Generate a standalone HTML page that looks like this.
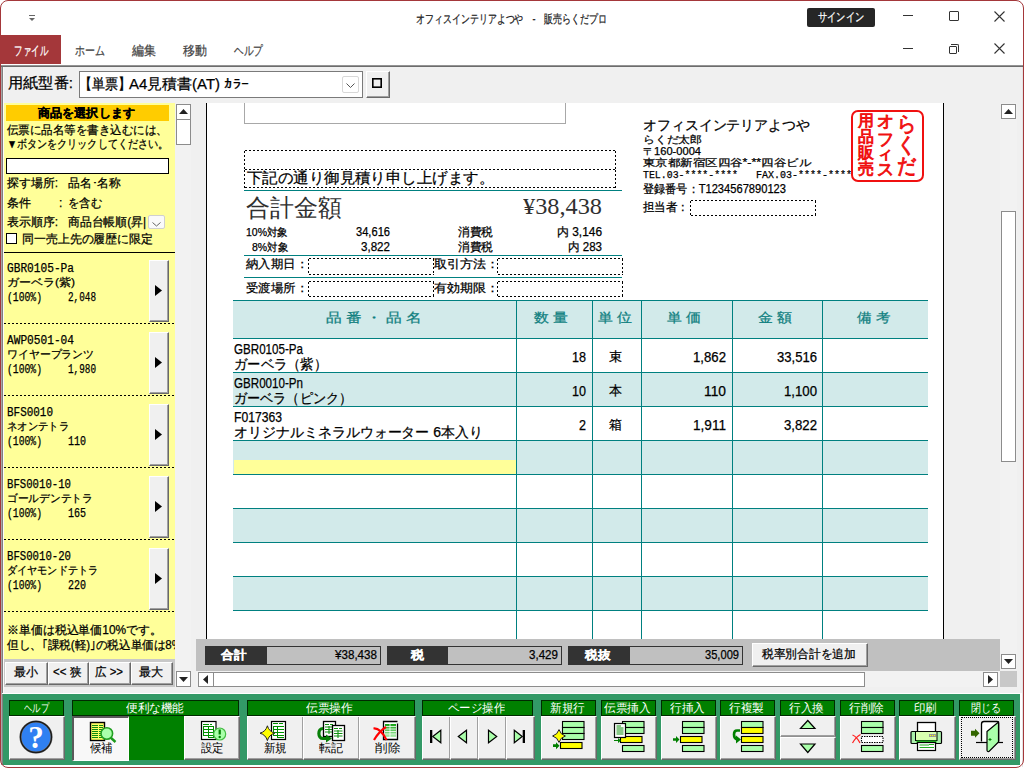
<!DOCTYPE html><html lang="ja"><head><meta charset="utf-8">
<style>
*{box-sizing:border-box;margin:0;padding:0}
html,body{width:1024px;height:768px;overflow:hidden;background:#fff}
body{position:relative;font-family:"Liberation Sans",sans-serif;color:#000}
.a{position:absolute}
.t{position:absolute;white-space:nowrap;line-height:1;-webkit-text-stroke:0.25px currentColor}
svg{position:absolute;overflow:visible}
#win{position:absolute;left:0;top:0;width:1024px;height:768px;overflow:hidden;background:#fff}
.sbtn{position:absolute;background:#fff;border:1px solid #8c8c8c}
.raised{position:absolute;background:#f0f0f0;border-top:1px solid #fff;border-left:1px solid #fff;border-right:1px solid #696969;border-bottom:1px solid #696969;box-shadow:inset -1px -1px 0 #a0a0a0}
.dot{position:absolute;background:repeating-linear-gradient(90deg,#000 0 2px,transparent 2px 4px) 1px 0/100% 1px no-repeat,repeating-linear-gradient(90deg,#000 0 2px,transparent 2px 4px) 1px 100%/100% 1px no-repeat,repeating-linear-gradient(180deg,#000 0 2px,transparent 2px 4px) 0 1px/1px 100% no-repeat,repeating-linear-gradient(180deg,#000 0 2px,transparent 2px 4px) 100% 1px/1px 100% no-repeat}
.tl{position:absolute;background:#008080}
.mono{font-family:"Liberation Mono",monospace}
.item{position:absolute;left:4px;width:171px;height:72px;background:repeating-linear-gradient(90deg,#000 0 2px,transparent 2px 4px) 0 100%/100% 1px no-repeat}
.gh{position:absolute;top:700px;height:16px;background:#008000;border:1px solid #002a00}
.gt{position:absolute;top:702px;font-size:12px;color:#fff;line-height:1;white-space:nowrap}
.tb{position:absolute;top:716px;height:44px;background:#f0f0f0;border-top:1px solid #fff;border-left:1px solid #fff;border-right:1px solid #696969;border-bottom:1px solid #696969;box-shadow:inset -1px -1px 0 #a0a0a0}
.bl{position:absolute;top:742px;font-size:12px;line-height:1;white-space:nowrap}
</style></head><body>
<div id="win">
  <!-- ===== title bar ===== -->
  <div class="a" style="left:29px;top:15px;width:6px;height:1px;background:#666"></div>
  <div class="a" style="left:29px;top:18px;width:0;height:0;border-left:3px solid transparent;border-right:3px solid transparent;border-top:3.5px solid #666"></div>
  <div class="t" style="left: 416px; top: 13px; font-size: 12px; color: rgb(34, 34, 34); transform: scaleX(0.746); transform-origin: 0px 0px;">オフィスインテリアよつや　-　販売らくだプロ</div>
  <div class="a" style="left:807px;top:8px;width:68px;height:19px;background:#262626;border-radius:2px"></div>
  <div class="t" style="left: 818px; top: 11px; font-size: 12px; color: rgb(255, 255, 255); transform: scaleX(0.767); transform-origin: 0px 0px;">サインイン</div>
  <div class="a" style="left:903px;top:15px;width:10px;height:1px;background:#333"></div>
  <div class="a" style="left:949px;top:11px;width:10px;height:10px;border:1px solid #333;border-radius:1px"></div>
  <svg style="left:994px;top:11px" width="11" height="11"><path d="M0.5 0.5L10.5 10.5M10.5 0.5L0.5 10.5" stroke="#333" stroke-width="1.1"></path></svg>
  <div class="a" style="left:903px;top:48px;width:10px;height:1px;background:#333"></div>
  <div class="a" style="left:949px;top:46px;width:8px;height:8px;border:1px solid #333;border-radius:1px"></div>
  <div class="a" style="left:951px;top:44px;width:8px;height:8px;border-top:1px solid #333;border-right:1px solid #333;border-radius:0 2px 0 0"></div>
  <svg style="left:994px;top:43px" width="11" height="11"><path d="M0.5 0.5L10.5 10.5M10.5 0.5L0.5 10.5" stroke="#333" stroke-width="1.1"></path></svg>
  <!-- ===== menu ===== -->
  <div class="a" style="left:0;top:35px;width:61px;height:29px;background:#a4373a"></div>
  <div class="t" style="left: 14px; top: 44px; font-size: 13px; color: rgb(255, 255, 255); transform: scaleX(0.654); transform-origin: 0px 0px;">ファイル</div>
  <div class="t" style="left: 75px; top: 44px; font-size: 13px; color: rgb(68, 68, 68); transform: scaleX(0.769); transform-origin: 0px 0px;">ホーム</div>
  <div class="t" style="left: 132px; top: 44px; font-size: 13px; color: rgb(68, 68, 68); transform: scaleX(0.923); transform-origin: 0px 0px;">編集</div>
  <div class="t" style="left: 183px; top: 44px; font-size: 13px; color: rgb(68, 68, 68); transform: scaleX(0.923); transform-origin: 0px 0px;">移動</div>
  <div class="t" style="left: 234px; top: 44px; font-size: 13px; color: rgb(68, 68, 68); transform: scaleX(0.744); transform-origin: 0px 0px;">ヘルプ</div>
  <div class="a" style="left:0;top:65px;width:1024px;height:1px;background:#949494"></div><div class="a" style="left:0;top:66px;width:1024px;height:1px;background:#6c6c6c"></div>

  <!-- ===== form area ===== -->
  <div class="a" style="left:0;top:67px;width:1024px;height:627px;background:#f0f0f0"></div>
  <div class="a" style="left:1px;top:67px;width:1px;height:698px;background:#a8a8a8"></div><div class="a" style="left:2px;top:67px;width:1px;height:698px;background:#808080"></div><div class="a" style="left:3px;top:67px;width:1px;height:627px;background:#fafafa"></div>
  <!-- paper combo -->
  <div class="t" style="left: 8px; top: 75px; font-size: 15px; transform: scaleX(1.013); transform-origin: 0px 0px;">用紙型番:</div>
  <div class="a" style="left:79px;top:71px;width:284px;height:27px;background:#fff;border:1px solid #7a7a7a"></div>
  <div class="t" style="left: 79px; top: 76px; font-size: 15px; transform: scaleX(0.867); transform-origin: 0px 0px;">【単票】</div><div class="t" style="left: 129px; top: 76px; font-size: 15px; transform: scaleX(0.996); transform-origin: 0px 0px;">A4見積書(AT)</div><div class="t" style="left: 224px; top: 77px; font-size: 13px; transform: scaleX(1.238); transform-origin: 0px 0px;">ｶﾗｰ</div>
  <div class="a" style="left:342px;top:76px;width:17px;height:17px;border:1px solid #d8d8d8;border-radius:2px;background:#fff"></div>
  <svg style="left:346px;top:83px" width="10" height="6"><path d="M0.5 0.5L4.5 4.5L8.5 0.5" stroke="#555" fill="none" stroke-width="1"></path></svg>
  <div class="raised" style="left:366px;top:71px;width:24px;height:27px"></div>
  <svg style="left:371px;top:77px" width="12" height="12"><rect x="1.8" y="1.8" width="8.4" height="8.4" fill="none" stroke="#000" stroke-width="1.6"></rect></svg>

  <!-- ===== left sidebar ===== -->
  <div class="a" style="left:4px;top:103px;width:171px;height:556px;background:#ffff99;overflow:hidden">
    <div class="a" style="left:2px;top:2px;width:163px;height:16px;background:#ffcc00"></div>
    <div class="t" style="left: 34px; top: 4px; font-size: 12px; font-weight: bold; transform: scaleX(1.01); transform-origin: 0px 0px;">商品を選択します</div>
    <div class="t" style="left: 3px; top: 21px; font-size: 12px; transform: scaleX(0.958); transform-origin: 0px 0px;">伝票に品名等を書き込むには、</div>
    <div class="t" style="left: 3px; top: 35px; font-size: 12px; transform: scaleX(0.839); transform-origin: 0px 0px;">▼ボタンをクリックしてください。</div>
    <div class="a" style="left:2px;top:55px;width:163px;height:16px;background:#fff;border:1px solid #000"></div>
    <div class="t" style="left: 3px; top: 74px; font-size: 12px; transform: scaleX(0.993); transform-origin: 0px 0px;">探す場所:</div>
    <div class="t" style="left: 64px; top: 74px; font-size: 12px; transform: scaleX(0.981); transform-origin: 0px 0px;">品名･名称</div>
    <div class="t" style="left: 3px; top: 94px; font-size: 12px; transform: scaleX(1); transform-origin: 0px 0px;">条件</div>
    <div class="t" style="left:55px;top:94px;font-size:12px">:</div>
    <div class="t" style="left: 64px; top: 94px; font-size: 12px; transform: scaleX(0.944); transform-origin: 0px 0px;">を含む</div>
    <div class="t" style="left: 3px; top: 113px; font-size: 12px; transform: scaleX(0.993); transform-origin: 0px 0px;">表示順序:</div>
    <div class="t" style="left: 64px; top: 113px; font-size: 12px; transform: scaleX(0.986); transform-origin: 0px 0px;">商品台帳順(昇|</div>
    <div class="a" style="left:144px;top:112px;width:17px;height:14px;border:1px solid #d0d0d0;border-radius:2px;background:#fafafa"></div>
    <svg style="left:148px;top:119px" width="9" height="5"><path d="M0.5 0.5L4.5 4L8.5 0.5" stroke="#666" fill="none" stroke-width="1"></path></svg>
    <div class="a" style="left:2px;top:130px;width:11px;height:11px;background:#fff;border:1px solid #000"></div>
    <div class="t" style="left: 18px; top: 130px; font-size: 12px; transform: scaleX(0.992); transform-origin: 0px 0px;">同一売上先の履歴に限定</div>
    <div class="a" style="left:0;top:149px;width:171px;height:1px;background:#000"></div>
    <!-- items -->
    <div class="item" style="left:0;top:150px;height:71px"></div>
    <div class="item" style="left:0;top:222px;height:71px"></div>
    <div class="item" style="left:0;top:294px;height:71px"></div>
    <div class="item" style="left:0;top:366px;height:71px"></div>
    <div class="item" style="left:0;top:438px;height:71px"></div>
    <!--items-->
    <div class="t mono" style="left: 3px; top: 160px; font-size: 12px; transform: scaleX(0.93); transform-origin: 0px 0px;">GBR0105-Pa</div>
    <div class="t" style="left: 3px; top: 174px; font-size: 11px; transform: scaleX(1.091); transform-origin: 0px 0px;">ガーベラ(紫)</div>
    <div class="t mono" style="left: 3px; top: 189px; font-size: 12px; transform: scaleX(0.81); transform-origin: 0px 0px;">(100%)</div>
    <div class="t mono" style="left: 64px; top: 189px; font-size: 12px; transform: scaleX(0.777); transform-origin: 0px 0px;">2,048</div>
    <div class="raised" style="left:145px;top:157px;width:20px;height:62px"></div>
    <svg style="left:151px;top:182px" width="7" height="11"><path d="M0 0L7 5.5L0 11Z" fill="#000"></path></svg>
    <div class="t mono" style="left: 3px; top: 232px; font-size: 12px; transform: scaleX(0.93); transform-origin: 0px 0px;">AWP0501-04</div>
    <div class="t" style="left: 3px; top: 246px; font-size: 11px; transform: scaleX(0.989); transform-origin: 0px 0px;">ワイヤープランツ</div>
    <div class="t mono" style="left: 3px; top: 261px; font-size: 12px; transform: scaleX(0.81); transform-origin: 0px 0px;">(100%)</div>
    <div class="t mono" style="left: 64px; top: 261px; font-size: 12px; transform: scaleX(0.777); transform-origin: 0px 0px;">1,980</div>
    <div class="raised" style="left:145px;top:229px;width:20px;height:62px"></div>
    <svg style="left:151px;top:254px" width="7" height="11"><path d="M0 0L7 5.5L0 11Z" fill="#000"></path></svg>
    <div class="t mono" style="left: 3px; top: 304px; font-size: 12px; transform: scaleX(0.912); transform-origin: 0px 0px;">BFS0010</div>
    <div class="t" style="left: 3px; top: 318px; font-size: 11px; transform: scaleX(0.939); transform-origin: 0px 0px;">ネオンテトラ</div>
    <div class="t mono" style="left: 3px; top: 333px; font-size: 12px; transform: scaleX(0.81); transform-origin: 0px 0px;">(100%)</div>
    <div class="t mono" style="left: 64px; top: 333px; font-size: 12px; transform: scaleX(0.833); transform-origin: 0px 0px;">110</div>
    <div class="raised" style="left:145px;top:301px;width:20px;height:62px"></div>
    <svg style="left:151px;top:326px" width="7" height="11"><path d="M0 0L7 5.5L0 11Z" fill="#000"></path></svg>
    <div class="t mono" style="left: 3px; top: 376px; font-size: 12px; transform: scaleX(0.889); transform-origin: 0px 0px;">BFS0010-10</div>
    <div class="t" style="left: 3px; top: 390px; font-size: 11px; transform: scaleX(0.977); transform-origin: 0px 0px;">ゴールデンテトラ</div>
    <div class="t mono" style="left: 3px; top: 405px; font-size: 12px; transform: scaleX(0.81); transform-origin: 0px 0px;">(100%)</div>
    <div class="t mono" style="left: 64px; top: 405px; font-size: 12px; transform: scaleX(0.833); transform-origin: 0px 0px;">165</div>
    <div class="raised" style="left:145px;top:373px;width:20px;height:62px"></div>
    <svg style="left:151px;top:398px" width="7" height="11"><path d="M0 0L7 5.5L0 11Z" fill="#000"></path></svg>
    <div class="t mono" style="left: 3px; top: 448px; font-size: 12px; transform: scaleX(0.889); transform-origin: 0px 0px;">BFS0010-20</div>
    <div class="t" style="left: 3px; top: 462px; font-size: 11px; transform: scaleX(0.919); transform-origin: 0px 0px;">ダイヤモンドテトラ</div>
    <div class="t mono" style="left: 3px; top: 477px; font-size: 12px; transform: scaleX(0.81); transform-origin: 0px 0px;">(100%)</div>
    <div class="t mono" style="left: 64px; top: 477px; font-size: 12px; transform: scaleX(0.833); transform-origin: 0px 0px;">220</div>
    <div class="raised" style="left:145px;top:445px;width:20px;height:62px"></div>
    <svg style="left:151px;top:470px" width="7" height="11"><path d="M0 0L7 5.5L0 11Z" fill="#000"></path></svg>
    <!--/items-->
    <div class="t" style="left: 3px; top: 521px; font-size: 12px; transform: scaleX(0.993); transform-origin: 0px 0px;">※単価は税込単価10%です。</div>
    <div class="t" style="left: 3px; top: 536px; font-size: 12px; transform: scaleX(0.965); transform-origin: 0px 0px;">但し、｢課税(軽)｣の税込単価は8%</div>
  </div>
  <!-- sidebar scrollbar -->
  <div class="a" style="left:175px;top:103px;width:16px;height:584px;background:#f2f2f2"></div>
  <div class="sbtn" style="left:176px;top:104px;width:15px;height:16px"></div>
  <svg style="left:179px;top:109px" width="9" height="5"><path d="M0 5L4.5 0L9 5Z" fill="#222"></path></svg>
  <div class="sbtn" style="left:176px;top:119px;width:15px;height:26px"></div>
  <div class="sbtn" style="left:176px;top:671px;width:15px;height:16px"></div>
  <svg style="left:179px;top:677px" width="9" height="5"><path d="M0 0L4.5 5L9 0Z" fill="#222"></path></svg>
  <!-- sidebar nav buttons -->
  <div class="a" style="left:4px;top:659px;width:171px;height:28px;background:#c8c8c8"></div>
  <div class="raised" style="left:5px;top:662px;width:43px;height:23px"></div>
  <div class="raised" style="left:48px;top:662px;width:41px;height:23px"></div>
  <div class="raised" style="left:89px;top:662px;width:42px;height:23px"></div>
  <div class="raised" style="left:131px;top:662px;width:42px;height:23px"></div>
  <div class="t" style="left: 14px; top: 666px; font-size: 12px; transform: scaleX(1); transform-origin: 0px 0px;">最小</div>
  <div class="t" style="left: 53px; top: 666px; font-size: 12px; transform: scaleX(0.954); transform-origin: 0px 0px;">&lt;&lt; 狭</div>
  <div class="t" style="left: 95px; top: 666px; font-size: 12px; transform: scaleX(0.954); transform-origin: 0px 0px;">広 &gt;&gt;</div>
  <div class="t" style="left: 139px; top: 666px; font-size: 12px; transform: scaleX(1); transform-origin: 0px 0px;">最大</div>

    <!-- ===== page ===== -->
  <div class="a" style="left:207px;top:103px;width:736px;height:536px;background:#fff"></div>
  <div class="a" style="left:206px;top:103px;width:1px;height:536px;background:#000"></div>
  <div class="a" style="left:943px;top:103px;width:1px;height:536px;background:#000"></div>
  <!-- top box -->
  <div class="a" style="left:244px;top:98px;width:322px;height:26px;border:1px solid #a8a8a8;border-top:none"></div>
  <div class="a" style="left:207px;top:98px;width:736px;height:5px;background:#f0f0f0"></div>
  <!-- message boxes -->
  <div class="dot" style="left:244px;top:150px;width:372px;height:20px"></div>
  <div class="dot" style="left:244px;top:169px;width:372px;height:19px"></div>
  <div class="t" style="left: 247px; top: 170px; font-size: 15px; transform: scaleX(1.029); transform-origin: 0px 0px;">下記の通り御見積り申し上げます。</div>
  <div class="tl" style="left:244px;top:190px;width:378px;height:1px"></div>
  <div class="t" style="left: 246px; top: 196px; font-size: 24px; font-family: &quot;Liberation Serif&quot;, serif; -webkit-text-stroke: 0px; color: rgb(48, 48, 48); transform: scaleX(1); transform-origin: 0px 0px;">合計金額</div>
  <div class="t" style="left: 523px; top: 194px; font-size: 24px; font-family: &quot;Liberation Serif&quot;, serif; -webkit-text-stroke: 0px; color: rgb(48, 48, 48); transform: scaleX(1.013); transform-origin: 0px 0px;">¥38,438</div>
  <div class="t" style="left: 246px; top: 227px; font-size: 11px; transform: scaleX(0.954); transform-origin: 0px 0px;">10%対象</div>
  <div class="t" style="left: 252px; top: 242px; font-size: 11px; transform: scaleX(0.95); transform-origin: 0px 0px;">8%対象</div>
  <div class="t" style="left: 356px; top: 226px; font-size: 12px; transform: scaleX(0.926); transform-origin: 0px 0px;">34,616</div>
  <div class="t" style="left: 361px; top: 241px; font-size: 12px; transform: scaleX(0.966); transform-origin: 0px 0px;">3,822</div>
  <div class="t" style="left: 458px; top: 226px; font-size: 12px; transform: scaleX(0.972); transform-origin: 0px 0px;">消費税</div>
  <div class="t" style="left: 458px; top: 241px; font-size: 12px; transform: scaleX(0.972); transform-origin: 0px 0px;">消費税</div>
  <div class="t" style="left: 557px; top: 226px; font-size: 12px; transform: scaleX(0.992); transform-origin: 0px 0px;">内 3,146</div>
  <div class="t" style="left: 568px; top: 241px; font-size: 12px; transform: scaleX(0.962); transform-origin: 0px 0px;">内 283</div>
  <div class="tl" style="left:244px;top:255px;width:378px;height:1px"></div>
  <div class="t" style="left: 246px; top: 258px; font-size: 12px; transform: scaleX(1.033); transform-origin: 0px 0px;">納入期日：</div>
  <div class="dot" style="left:308px;top:258px;width:126px;height:17px"></div>
  <div class="t" style="left: 434px; top: 258px; font-size: 12px; transform: scaleX(1.083); transform-origin: 0px 0px;">取引方法：</div>
  <div class="dot" style="left:497px;top:258px;width:126px;height:17px"></div>
  <div class="tl" style="left:244px;top:277px;width:378px;height:1px"></div>
  <div class="t" style="left: 246px; top: 282px; font-size: 12px; transform: scaleX(1.033); transform-origin: 0px 0px;">受渡場所：</div>
  <div class="dot" style="left:308px;top:281px;width:126px;height:16px"></div>
  <div class="t" style="left: 434px; top: 282px; font-size: 12px; transform: scaleX(1.083); transform-origin: 0px 0px;">有効期限：</div>
  <div class="dot" style="left:497px;top:281px;width:126px;height:16px"></div>
  <!-- company -->
  <div class="t" style="left: 643px; top: 118px; font-size: 14px; transform: scaleX(0.994); transform-origin: 0px 0px;">オフィスインテリアよつや</div>
  <div class="t" style="left: 643px; top: 135px; font-size: 10px; transform: scaleX(1.18); transform-origin: 0px 0px;">らくだ太郎</div>
  <div class="t" style="left: 643px; top: 147px; font-size: 10px; transform: scaleX(1.11); transform-origin: 0px 0px;">〒160-0004</div>
  <div class="t" style="left: 643px; top: 158px; font-size: 10px; transform: scaleX(1.244); transform-origin: 0px 0px;">東京都新宿区四谷*-**四谷ビル</div>
  <div class="t mono" style="left: 643px; top: 170px; font-size: 11px; transform: scaleX(0.899); transform-origin: 0px 0px;">TEL.03-****-****</div><div class="t mono" style="left: 756px; top: 170px; font-size: 11px; transform: scaleX(0.909); transform-origin: 0px 0px;">FAX.03-****-****</div>
  <div class="t" style="left: 643px; top: 183px; font-size: 12px; transform: scaleX(0.928); transform-origin: 0px 0px;">登録番号：T1234567890123</div>
  <div class="t" style="left: 643px; top: 201px; font-size: 12px; transform: scaleX(0.958); transform-origin: 0px 0px;">担当者：</div>
  <div class="dot" style="left:690px;top:200px;width:126px;height:16px"></div>
  <div class="a" style="left:851px;top:110px;width:73px;height:72px;border:2px solid #f01010;border-radius:7px"></div>
  <div class="t" style="left: 858px; top: 113px; font-size: 16px; color: rgb(240, 16, 16); -webkit-text-stroke: 0.9px rgb(240, 16, 16); transform: scaleX(1); transform-origin: 0px 0px;">用</div>
  <div class="t" style="left: 858px; top: 129px; font-size: 16px; color: rgb(240, 16, 16); -webkit-text-stroke: 0.9px rgb(240, 16, 16); transform: scaleX(1); transform-origin: 0px 0px;">品</div>
  <div class="t" style="left: 858px; top: 145px; font-size: 16px; color: rgb(240, 16, 16); -webkit-text-stroke: 0.9px rgb(240, 16, 16); transform: scaleX(1); transform-origin: 0px 0px;">販</div>
  <div class="t" style="left: 858px; top: 161px; font-size: 16px; color: rgb(240, 16, 16); -webkit-text-stroke: 0.9px rgb(240, 16, 16); transform: scaleX(1); transform-origin: 0px 0px;">売</div>
  <div class="t" style="left: 877px; top: 113px; font-size: 17px; color: rgb(240, 16, 16); -webkit-text-stroke: 0.9px rgb(240, 16, 16); transform: scaleX(1); transform-origin: 0px 0px;">オ</div>
  <div class="t" style="left: 877px; top: 131px; font-size: 17px; color: rgb(240, 16, 16); -webkit-text-stroke: 0.9px rgb(240, 16, 16); transform: scaleX(1); transform-origin: 0px 0px;">フ</div>
  <div class="t" style="left: 877px; top: 146px; font-size: 15px; color: rgb(240, 16, 16); -webkit-text-stroke: 0.9px rgb(240, 16, 16); transform: scaleX(1.067); transform-origin: 0px 0px;">ィ</div>
  <div class="t" style="left: 877px; top: 161px; font-size: 17px; color: rgb(240, 16, 16); -webkit-text-stroke: 0.9px rgb(240, 16, 16); transform: scaleX(1); transform-origin: 0px 0px;">ス</div>
  <div class="t" style="left: 897px; top: 113px; font-size: 21px; color: rgb(240, 16, 16); -webkit-text-stroke: 0.9px rgb(240, 16, 16); transform: scaleX(0.909); transform-origin: 0px 0px;">ら</div>
  <div class="t" style="left: 897px; top: 134px; font-size: 21px; color: rgb(240, 16, 16); -webkit-text-stroke: 0.9px rgb(240, 16, 16); transform: scaleX(0.909); transform-origin: 0px 0px;">く</div>
  <div class="t" style="left: 897px; top: 155px; font-size: 21px; color: rgb(240, 16, 16); -webkit-text-stroke: 0.9px rgb(240, 16, 16); transform: scaleX(0.909); transform-origin: 0px 0px;">だ</div>
  <div class="a" style="left:233px;top:300px;width:695px;height:38px;background:#d2eaea"></div>
  <div class="a" style="left:233px;top:372px;width:695px;height:34px;background:#d2eaea"></div>
  <div class="a" style="left:233px;top:440px;width:695px;height:34px;background:#d2eaea"></div>
  <div class="a" style="left:233px;top:508px;width:695px;height:34px;background:#d2eaea"></div>
  <div class="a" style="left:233px;top:576px;width:695px;height:34px;background:#d2eaea"></div>
  <div class="a" style="left:234px;top:460px;width:282px;height:14px;background:#ffff99"></div>
  <div class="tl" style="left:233px;top:300px;width:695px;height:1px"></div>
  <div class="tl" style="left:233px;top:338px;width:695px;height:1px"></div>
  <div class="tl" style="left:233px;top:372px;width:695px;height:1px"></div>
  <div class="tl" style="left:233px;top:406px;width:695px;height:1px"></div>
  <div class="tl" style="left:233px;top:440px;width:695px;height:1px"></div>
  <div class="tl" style="left:233px;top:474px;width:695px;height:1px"></div>
  <div class="tl" style="left:233px;top:508px;width:695px;height:1px"></div>
  <div class="tl" style="left:233px;top:542px;width:695px;height:1px"></div>
  <div class="tl" style="left:233px;top:576px;width:695px;height:1px"></div>
  <div class="tl" style="left:233px;top:610px;width:695px;height:1px"></div>
  <div class="tl" style="left:516px;top:300px;width:1px;height:339px"></div>
  <div class="tl" style="left:592px;top:300px;width:1px;height:339px"></div>
  <div class="tl" style="left:641px;top:300px;width:1px;height:339px"></div>
  <div class="tl" style="left:732px;top:300px;width:1px;height:339px"></div>
  <div class="tl" style="left:822px;top:300px;width:1px;height:339px"></div>
  <div class="t" style="left: 326px; top: 311px; font-size: 13px; color: rgb(15, 127, 127); transform: scaleX(1.208); transform-origin: 0px 0px;">品&nbsp;番&nbsp;・&nbsp;品&nbsp;名</div>
  <div class="t" style="left: 534px; top: 311px; font-size: 13px; color: rgb(15, 127, 127); transform: scaleX(1.148); transform-origin: 0px 0px;">数&nbsp;量</div>
  <div class="t" style="left: 598px; top: 311px; font-size: 13px; color: rgb(15, 127, 127); transform: scaleX(1.148); transform-origin: 0px 0px;">単&nbsp;位</div>
  <div class="t" style="left: 667px; top: 311px; font-size: 13px; color: rgb(15, 127, 127); transform: scaleX(1.148); transform-origin: 0px 0px;">単&nbsp;価</div>
  <div class="t" style="left: 758px; top: 311px; font-size: 13px; color: rgb(15, 127, 127); transform: scaleX(1.148); transform-origin: 0px 0px;">金&nbsp;額</div>
  <div class="t" style="left: 857px; top: 311px; font-size: 13px; color: rgb(15, 127, 127); transform: scaleX(1.114); transform-origin: 0px 0px;">備&nbsp;考</div>
  <div class="t" style="left: 234px; top: 342px; font-size: 14px; transform: scaleX(0.829); transform-origin: 0px 0px;">GBR0105-Pa</div>
  <div class="t" style="left: 234px; top: 357px; font-size: 14px; transform: scaleX(0.949); transform-origin: 0px 0px;">ガーベラ（紫）</div>
  <div class="t" style="left: 572px; top: 350px; font-size: 14px; transform: scaleX(0.899); transform-origin: 0px 0px;">18</div>
  <div class="t" style="left: 609px; top: 350px; font-size: 13px; transform: scaleX(1); transform-origin: 0px 0px;">束</div>
  <div class="t" style="left: 693px; top: 350px; font-size: 14px; transform: scaleX(0.942); transform-origin: 0px 0px;">1,862</div>
  <div class="t" style="left: 777px; top: 350px; font-size: 14px; transform: scaleX(0.934); transform-origin: 0px 0px;">33,516</div>
  <div class="t" style="left: 234px; top: 376px; font-size: 14px; transform: scaleX(0.829); transform-origin: 0px 0px;">GBR0010-Pn</div>
  <div class="t" style="left: 234px; top: 391px; font-size: 14px; transform: scaleX(0.937); transform-origin: 0px 0px;">ガーベラ（ピンク）</div>
  <div class="t" style="left: 572px; top: 384px; font-size: 14px; transform: scaleX(0.899); transform-origin: 0px 0px;">10</div>
  <div class="t" style="left: 609px; top: 384px; font-size: 13px; transform: scaleX(1); transform-origin: 0px 0px;">本</div>
  <div class="t" style="left: 704px; top: 384px; font-size: 14px; transform: scaleX(0.985); transform-origin: 0px 0px;">110</div>
  <div class="t" style="left: 784px; top: 384px; font-size: 14px; transform: scaleX(0.942); transform-origin: 0px 0px;">1,100</div>
  <div class="t" style="left: 234px; top: 410px; font-size: 14px; transform: scaleX(0.868); transform-origin: 0px 0px;">F017363</div>
  <div class="t" style="left: 234px; top: 425px; font-size: 14px; transform: scaleX(0.997); transform-origin: 0px 0px;">オリジナルミネラルウォーター 6本入り</div>
  <div class="t" style="left: 579px; top: 418px; font-size: 14px; transform: scaleX(0.898); transform-origin: 0px 0px;">2</div>
  <div class="t" style="left: 609px; top: 418px; font-size: 13px; transform: scaleX(1); transform-origin: 0px 0px;">箱</div>
  <div class="t" style="left: 693px; top: 418px; font-size: 14px; transform: scaleX(0.971); transform-origin: 0px 0px;">1,911</div>
  <div class="t" style="left: 784px; top: 418px; font-size: 14px; transform: scaleX(0.942); transform-origin: 0px 0px;">3,822</div>
  <!-- right scrollbar -->
  <div class="a" style="left:1000px;top:103px;width:17px;height:567px;background:#f2f2f2"></div>
  <div class="sbtn" style="left:1001px;top:104px;width:15px;height:15px"></div>
  <svg style="left:1004px;top:109px" width="9" height="5"><path d="M0 5L4.5 0L9 5Z" fill="#222"></path></svg>
  <div class="sbtn" style="left:1001px;top:211px;width:15px;height:251px"></div>
  <div class="sbtn" style="left:1001px;top:654px;width:15px;height:15px"></div>
  <svg style="left:1004px;top:659px" width="9" height="5"><path d="M0 0L4.5 5L9 0Z" fill="#222"></path></svg>
  <!-- totals bar -->
  <div class="a" style="left:196px;top:639px;width:804px;height:32px;background:#c0c0c0"></div>
  <div class="a" style="left:205px;top:646px;width:62px;height:19px;background:#333"></div>
  <div class="t" style="left: 221px; top: 649px; font-size: 12px; color: rgb(255, 255, 255); font-weight: bold; transform: scaleX(1.042); transform-origin: 0px 0px;">合計</div>
  <div class="a" style="left:266px;top:646px;width:115px;height:19px;background:#c0c0c0;border:1px solid #333"></div>
  <div class="t" style="left: 335px; top: 649px; font-size: 12px; transform: scaleX(0.968); transform-origin: 0px 0px;">¥38,438</div>
  <div class="a" style="left:387px;top:646px;width:61px;height:19px;background:#333"></div>
  <div class="t" style="left: 411px; top: 649px; font-size: 12px; color: rgb(255, 255, 255); font-weight: bold; transform: scaleX(1.083); transform-origin: 0px 0px;">税</div>
  <div class="a" style="left:447px;top:646px;width:115px;height:19px;background:#c0c0c0;border:1px solid #333"></div>
  <div class="t" style="left: 529px; top: 649px; font-size: 12px; transform: scaleX(0.966); transform-origin: 0px 0px;">3,429</div>
  <div class="a" style="left:568px;top:646px;width:62px;height:19px;background:#333"></div>
  <div class="t" style="left: 585px; top: 649px; font-size: 12px; color: rgb(255, 255, 255); font-weight: bold; transform: scaleX(1.042); transform-origin: 0px 0px;">税抜</div>
  <div class="a" style="left:629px;top:646px;width:114px;height:19px;background:#c0c0c0;border:1px solid #333"></div>
  <div class="t" style="left: 705px; top: 649px; font-size: 12px; transform: scaleX(0.926); transform-origin: 0px 0px;">35,009</div>
  <div class="raised" style="left:752px;top:643px;width:116px;height:24px"></div>
  <div class="t" style="left: 762px; top: 648px; font-size: 12px; transform: scaleX(0.979); transform-origin: 0px 0px;">税率別合計を追加</div>
  <!-- h scrollbar -->
  <div class="a" style="left:196px;top:671px;width:804px;height:16px;background:#f2f2f2"></div>
  <div class="sbtn" style="left:198px;top:672px;width:16px;height:15px"></div>
  <svg style="left:203px;top:675px" width="5" height="9"><path d="M5 0L0 4.5L5 9Z" fill="#222"></path></svg>
  <div class="sbtn" style="left:213px;top:672px;width:652px;height:15px"></div>
  <div class="sbtn" style="left:983px;top:672px;width:15px;height:15px"></div>
  <svg style="left:988px;top:675px" width="5" height="9"><path d="M0 0L5 4.5L0 9Z" fill="#222"></path></svg>
  <div class="a" style="left:1000px;top:671px;width:17px;height:16px;background:#c8c8c8"></div>

    <!-- ===== toolbar ===== -->
  <div class="a" style="left:2px;top:693px;width:1020px;height:1px;background:#fff"></div>
  <div class="a" style="left:3px;top:694px;width:1017px;height:71px;background:#339966"></div>
  <div class="gh" style="left:9px;width:55px"></div>
  <div class="gh" style="left:72px;width:167px"></div>
  <div class="gh" style="left:247px;width:168px"></div>
  <div class="gh" style="left:422px;width:111px"></div>
  <div class="gh" style="left:541px;width:55px"></div>
  <div class="gh" style="left:601px;width:55px"></div>
  <div class="gh" style="left:661px;width:55px"></div>
  <div class="gh" style="left:720px;width:55px"></div>
  <div class="gh" style="left:780px;width:55px"></div>
  <div class="gh" style="left:840px;width:55px"></div>
  <div class="gh" style="left:899px;width:55px"></div>
  <div class="gh" style="left:959px;width:55px"></div>
  <div class="gt" style="left: 24px; transform: scaleX(0.694); transform-origin: 0px 0px;">ヘルプ</div>
  <div class="gt" style="left: 126px; transform: scaleX(0.967); transform-origin: 0px 0px;">便利な機能</div>
  <div class="gt" style="left: 306px; transform: scaleX(0.979); transform-origin: 0px 0px;">伝票操作</div>
  <div class="gt" style="left: 448px; transform: scaleX(0.95); transform-origin: 0px 0px;">ページ操作</div>
  <div class="gt" style="left: 550px; transform: scaleX(0.972); transform-origin: 0px 0px;">新規行</div>
  <div class="gt" style="left: 604px; transform: scaleX(0.979); transform-origin: 0px 0px;">伝票挿入</div>
  <div class="gt" style="left: 670px; transform: scaleX(0.972); transform-origin: 0px 0px;">行挿入</div>
  <div class="gt" style="left: 729px; transform: scaleX(0.972); transform-origin: 0px 0px;">行複製</div>
  <div class="gt" style="left: 789px; transform: scaleX(0.972); transform-origin: 0px 0px;">行入換</div>
  <div class="gt" style="left: 849px; transform: scaleX(0.972); transform-origin: 0px 0px;">行削除</div>
  <div class="gt" style="left: 914px; transform: scaleX(0.958); transform-origin: 0px 0px;">印刷</div>
  <div class="gt" style="left: 971px; transform: scaleX(0.833); transform-origin: 0px 0px;">閉じる</div>
  <!-- buttons -->
  <div class="tb" style="left:9px;width:56px"></div>
  <div class="a" style="left:72px;top:716px;width:167px;height:44px;background:#008000"></div>
  <div class="a" style="left:72px;top:716px;width:57px;height:45px;background:#f8f8f8;border-top:2px solid #5a5a5a;border-left:2px solid #5a5a5a;border-right:1px solid #fff;border-bottom:1px solid #fff"></div>
  <div class="tb" style="left:184px;width:56px"></div>
  <div class="tb" style="left:247px;width:57px"></div>
  <div class="tb" style="left:303px;width:57px"></div>
  <div class="tb" style="left:359px;width:57px"></div>
  <div class="tb" style="left:422px;width:29px"></div>
  <div class="tb" style="left:450px;width:29px"></div>
  <div class="tb" style="left:478px;width:29px"></div>
  <div class="tb" style="left:506px;width:29px"></div>
  <div class="tb" style="left:541px;width:56px"></div>
  <div class="tb" style="left:601px;width:56px"></div>
  <div class="tb" style="left:661px;width:56px"></div>
  <div class="tb" style="left:720px;width:56px"></div>
  <div class="tb" style="left:780px;width:56px;height:21px;border-bottom:1px solid #909090"></div>
  <div class="tb" style="left:780px;top:737px;width:56px;height:23px"></div>
  <div class="tb" style="left:840px;width:56px"></div>
  <div class="tb" style="left:899px;width:57px"></div>
  <div class="tb" style="left:959px;width:57px"></div>
  <div class="a" style="left:961px;top:717px;width:52px;height:41px;border:1px dotted #000"></div>
  <div class="bl" style="left: 90px; transform: scaleX(0.958); transform-origin: 0px 0px;">候補</div>
  <div class="bl" style="left: 201px; transform: scaleX(0.958); transform-origin: 0px 0px;">設定</div>
  <div class="bl" style="left: 264px; transform: scaleX(0.958); transform-origin: 0px 0px;">新規</div>
  <div class="bl" style="left: 319px; transform: scaleX(1); transform-origin: 0px 0px;">転記</div>
  <div class="bl" style="left: 375px; transform: scaleX(1.042); transform-origin: 0px 0px;">削除</div>
  <svg style="left:0;top:0;pointer-events:none" width="1024" height="768" viewBox="0 0 1024 768">
 <defs>
  <g id="gl"><path d="M0 0H11M0 2.5H11M0 5H11M0 7.5H11M0 10H11" stroke="#009000" stroke-width="1.3"></path></g>
 </defs>
 <!-- help -->
 <circle cx="36" cy="737" r="15.5" fill="#2f80f2" stroke="#777" stroke-width="2.2"></circle>
 <circle cx="36" cy="737" r="15.5" fill="none" stroke="#1a1a1a" stroke-width="1.3"></circle>
 <text x="36" y="748" font-family="Liberation Serif" font-weight="bold" font-size="31" fill="#fff" text-anchor="middle">?</text>
 <!-- 候補 -->
 <rect x="90.5" y="722.5" width="14" height="18" fill="#ffff66" stroke="#000" stroke-width="1.4"></rect>
 <path d="M92 725.5H98M99 725.5H103M92 727.5H98M99 727.5H103M92 729.5H98M99 729.5H103M92 731.5H98M99 731.5H103M92 733.5H98M99 733.5H103M92 735.5H98M99 735.5H103M92 737.5H98M99 737.5H103" stroke="#108a10" stroke-width="1.2"></path>
 <path d="M110 737L115.5 742" stroke="#1a9a1a" stroke-width="2.4"></path>
 <circle cx="106.8" cy="733.5" r="5.8" fill="#aaffaa" stroke="#22a022" stroke-width="1.6"></circle>
 <!-- 設定 -->
 <rect x="201.5" y="721.5" width="14.5" height="18" fill="#fff" stroke="#000" stroke-width="1.2"></rect>
 <path d="M203 724.5H209M210 724.5H212M203 726.5H214M203 729.5H214M203 732.5H214M203 735.5H214M208.5 737.5H214M203.5 726V736M208.5 726V738M213.5 726V738" stroke="#009000" stroke-width="1"></path>
 <circle cx="219.7" cy="734" r="6" fill="#aaffaa" stroke="#44bb44" stroke-width="1.2"></circle>
 <path d="M219.7 729.5V734.5" stroke="#008000" stroke-width="2.2"></path>
 <circle cx="219.7" cy="737" r="1.2" fill="#008000"></circle>
 <!-- 新規 -->
 <rect x="271.5" y="721.5" width="14" height="18" fill="#fff" stroke="#000" stroke-width="1.2"></rect>
 <path d="M273 723.5H278M279 723.5H283M273 726.5H284M273 729.5H284M273 732.5H284M273 735.5H284M277.5 737.5H284M273.5 726V736M277.5 726V738" stroke="#009000" stroke-width="1"></path>
 <path d="M267.4 725.8000000000001Q269.0 731.6 274.79999999999995 733.2Q269.0 734.8000000000001 267.4 740.6Q265.79999999999995 734.8000000000001 260.0 733.2Q265.79999999999995 731.6 267.4 725.8000000000001Z" fill="#ffff00" stroke="#222" stroke-width="1"></path>
 <!-- 転記 -->
 <rect x="323.5" y="721.5" width="12" height="15" fill="#fff" stroke="#000" stroke-width="1.3"></rect>
 <path d="M325 724.5H329M330 724.5H333M325 727H333.5M325 729.5H333.5M325 732H333.5M329 726V734" stroke="#109010" stroke-width="1.1"></path>
 <rect x="332.5" y="725.5" width="12" height="15" fill="#fff" stroke="#000" stroke-width="1.3"></rect>
 <path d="M334 728.5H338M339 728.5H342M334 731H342.5M334 733.5H342.5M334 736H342.5M338 730V738" stroke="#109010" stroke-width="1.1"></path>
 <path d="M323 728.5C317.5 728.5 317.5 738.5 323 738.5H326" stroke="#088008" stroke-width="3.2" fill="none"></path>
 <path d="M326 734.5L332 738.5L326 742.5Z" fill="#088008"></path>
 <!-- 削除 -->
 <rect x="383.5" y="721.5" width="14" height="18" fill="#fff" stroke="#000" stroke-width="1.3" stroke-dasharray="14 2 60"></rect>
 <defs><linearGradient id="fd" x1="0" y1="0" x2="0" y2="1"><stop offset="0" stop-color="#10a010"></stop><stop offset="1" stop-color="#b0f0b0"></stop></linearGradient></defs>
 <rect x="385" y="724" width="11" height="13" fill="url(#fd)"></rect>
 <path d="M385 726.5H396M385 729H396M385 731.5H396M385 734H396M390 724V737" stroke="#fff" stroke-width="0.8"></path>
 <path d="M373.5 728.5C378 728 383 733 386.5 740" stroke="#ff0000" stroke-width="2.2" fill="none"></path>
 <path d="M374 740C377 735 381 730 386 727" stroke="#ff0000" stroke-width="2.2" fill="none"></path>
 <!-- page nav -->
 <rect x="430" y="730" width="2.3" height="13" fill="#000"></rect>
 <path d="M432.8 736.5L440.8 730.3V742.7Z" fill="#aaffaa" stroke="#000" stroke-width="1.2"></path>
 <path d="M458.3 736.5L466.5 730.3V742.7Z" fill="#aaffaa" stroke="#000" stroke-width="1.2"></path>
 <path d="M496.7 736.5L488.5 730.3V742.7Z" fill="#aaffaa" stroke="#000" stroke-width="1.2"></path>
 <path d="M522.2 736.5L514.3 730.3V742.7Z" fill="#aaffaa" stroke="#000" stroke-width="1.2"></path>
 <rect x="522.7" y="730" width="2.3" height="13" fill="#000"></rect>
 <!-- 新規行 -->
 <g stroke="#000" stroke-width="1.1">
  <rect x="562.5" y="721.5" width="21.5" height="6" fill="#aaffaa"></rect>
  <rect x="562.5" y="727.5" width="21.5" height="6" fill="#aaffaa"></rect>
  <rect x="562.5" y="733.5" width="21.5" height="6" fill="#aaffaa"></rect>
  <rect x="560.5" y="742.5" width="21.5" height="6" fill="#ffff00"></rect>
 </g>
 <path d="M559 729.6Q560.4 734.6 565.4 736Q560.4 737.4 559 742.4Q557.6 737.4 552.6 736Q557.6 734.6 559 729.6Z" fill="#ffff00" stroke="#222" stroke-width="1"></path>
 <path d="M553 744.3H556V742.2L559.5 745.7L556 749.2V747.1H553Z" fill="#008000"></path>
 <!-- 伝票挿入 -->
 <g stroke="#000" stroke-width="1.1">
  <rect x="622.5" y="721.5" width="21.5" height="6" fill="#aaffaa"></rect>
  <rect x="622.5" y="727.5" width="21.5" height="6" fill="#aaffaa"></rect>
  <rect x="620.5" y="736.5" width="21.5" height="6" fill="#ffff00"></rect>
  <rect x="622.5" y="745.5" width="21.5" height="6" fill="#aaffaa"></rect>
 </g>
 <rect x="614.5" y="723.5" width="11" height="14" fill="#fff" stroke="#000" stroke-width="1.2"></rect>
 <path d="M616.5 726H621M616.5 728H623.5M616.5 730H623.5M616.5 732H623.5M616.5 734H623.5" stroke="#109010" stroke-width="1"></path>
 <path d="M614 740H618V738L621 740.5L618 743V741H614Z" fill="#008000"></path>
 <!-- 行挿入 -->
 <g stroke="#000" stroke-width="1.1">
  <rect x="682.5" y="721.5" width="21.5" height="6" fill="#aaffaa"></rect>
  <rect x="682.5" y="727.5" width="21.5" height="6" fill="#aaffaa"></rect>
  <rect x="680.5" y="736.5" width="21.5" height="6" fill="#ffff00"></rect>
  <rect x="682.5" y="745.5" width="21.5" height="6" fill="#aaffaa"></rect>
 </g>
 <path d="M673 738.2H676V736L679.5 739.5L676 743V740.8H673Z" fill="#008000"></path>
 <!-- 行複製 -->
 <g stroke="#000" stroke-width="1.1">
  <rect x="741.5" y="721.5" width="21.5" height="6" fill="#aaffaa"></rect>
  <rect x="741.5" y="727.5" width="21.5" height="6" fill="#ffff00"></rect>
  <rect x="741.5" y="736.5" width="21.5" height="6" fill="#ffff00"></rect>
  <rect x="741.5" y="745.5" width="21.5" height="6" fill="#aaffaa"></rect>
 </g>
 <path d="M740 730.5H737C733 730.5 733 738 737 739.5" stroke="#008000" stroke-width="2.6" fill="none"></path>
 <path d="M736 735.5L741 739.5L736 743.5Z" fill="#008000"></path>
 <!-- 行入換 -->
 <path d="M800.5 728.5H815L807.8 720.5Z" fill="#aaffaa" stroke="#000" stroke-width="1.2"></path>
 <path d="M800.5 744H815L807.8 752.5Z" fill="#aaffaa" stroke="#000" stroke-width="1.2"></path>
 <!-- 行削除 -->
 <g stroke="#000" stroke-width="1.1">
  <rect x="861.5" y="721.5" width="21.5" height="6" fill="#aaffaa"></rect>
  <rect x="861.5" y="727.5" width="21.5" height="6" fill="#aaffaa"></rect>
  <rect x="861.5" y="736.5" width="21.5" height="6" fill="#fff" stroke-dasharray="1.5 1"></rect>
  <rect x="861.5" y="745.5" width="21.5" height="6" fill="#aaffaa"></rect>
 </g>
 <path d="M852.5 735C855 736 858 739 860 743M852.5 743C854.5 739.5 857 736.5 860.5 734.5" stroke="#ff2020" stroke-width="1.2" fill="none"></path>
 <!-- 印刷 -->
 <rect x="917.5" y="722.5" width="18" height="10" fill="#fff" stroke="#000" stroke-width="1.3"></rect>
 <path d="M912 731.5H940.5Q941.5 731.5 941.5 732.5V742.5Q941.5 743.5 940.5 743.5H912Q911 743.5 911 742.5V732.5Q911 731.5 912 731.5Z" fill="#aaf0aa" stroke="#000" stroke-width="1.2"></path>
 <rect x="915.5" y="731.5" width="21.5" height="9" fill="#d8ffb0" stroke="#000" stroke-width="1"></rect>
 <rect x="929" y="734" width="7" height="3" fill="#999"></rect>
 <path d="M930 735.5H931M932 735.5H933M934 735.5H935" stroke="#ff0" stroke-width="1"></path>
 <rect x="916.5" y="740.5" width="20" height="2.5" fill="#22bb22"></rect>
 <rect x="917.5" y="742.5" width="18" height="8" fill="#fff" stroke="#000" stroke-width="1.2"></rect>
 <path d="M919.5 745H929M919.5 747.5H934M929 744.5H934" stroke="#22aa22" stroke-width="1"></path>
 <!-- 閉じる -->
 <path d="M981.5 741.5V724Q981.5 721.5 984 721.5H997Q998.7 721.5 998.7 723.5V741.5" fill="#fff" stroke="#000" stroke-width="1.3"></path>
 <path d="M976 742.5H1003" stroke="#000" stroke-width="1.2"></path>
 <path d="M987 731.5L998.5 722V742L989 751.5Q987 752 987 750Z" fill="#aaffaa" stroke="#000" stroke-width="1.2"></path>
 <path d="M988.5 739.5H991.5M990 738V741" stroke="#008000" stroke-width="1"></path>
 <path d="M971 730.8H975V728.8L979.5 733.3L975 737.8V735.8H971Z" fill="#336600"></path>
</svg>



  <div class="a" style="left:1022px;top:67px;width:1px;height:700px;background:#e4e4e4"></div>
  <!-- window border -->
  <div class="a" style="left:0;top:0;width:1024px;height:768px;border:1px solid #a4373a;border-radius:8px;pointer-events:none"></div>
</div>

</body></html>
